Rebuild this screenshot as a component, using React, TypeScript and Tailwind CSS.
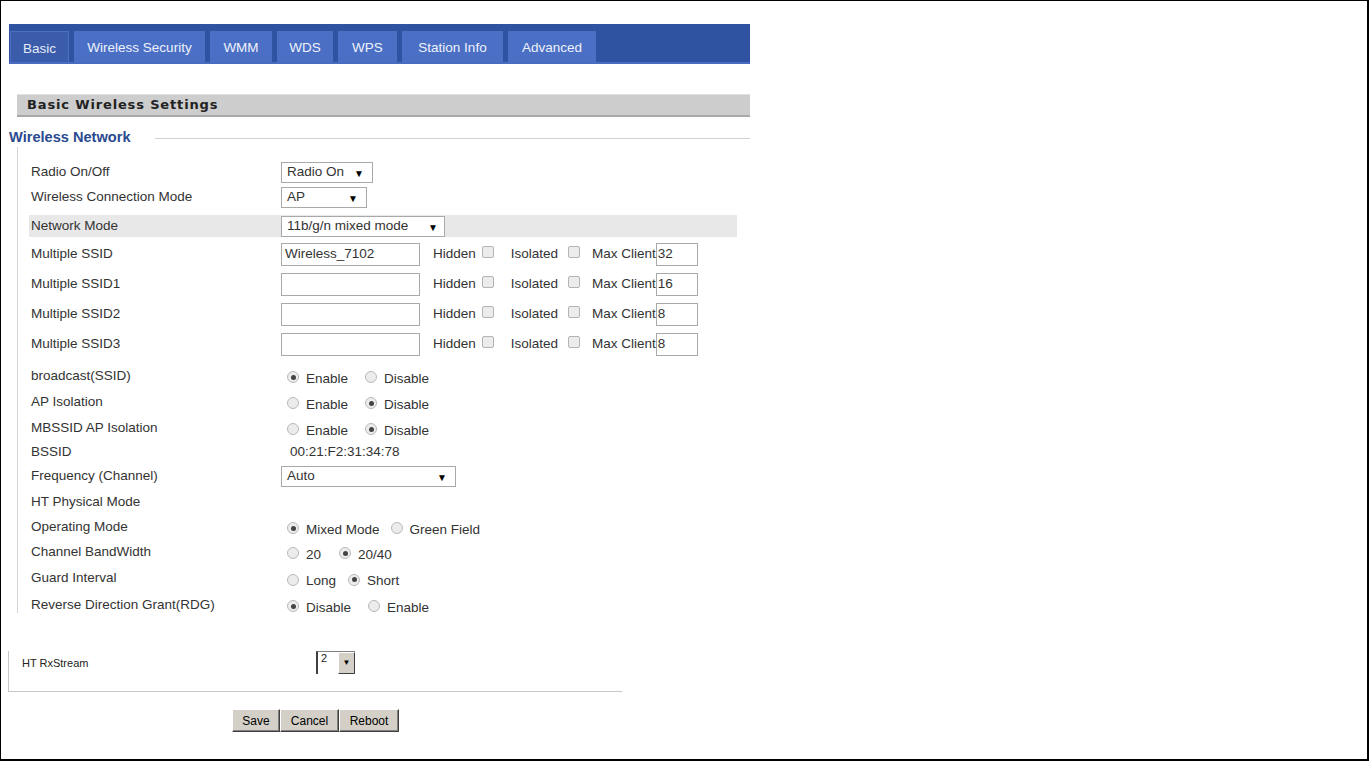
import React from "react";

const font = { fontFamily: '"Liberation Sans", Arial, sans-serif' };

function Sel({ w, text, arrowRight = 8 }: { w: number; text: string; arrowRight?: number }) {
  return (
    <div
      className="relative flex h-[21px] items-center border border-[#a9a9a9] bg-white pl-[5px] text-[13.5px] text-[#333]"
      style={{ width: w }}
    >
      <span>{text}</span>
      <span className="absolute top-[3px] text-[10px] text-black" style={{ right: arrowRight }}>
        ▼
      </span>
    </div>
  );
}

function Check() {
  return <span className="inline-block h-[12px] w-[12px] rounded-[2px] border border-[#b4b4b4] bg-[#ececec]" />;
}

function Radio({ on }: { on: boolean }) {
  return (
    <span className="inline-flex h-[12px] w-[12px] items-center justify-center rounded-full border border-[#b9b9b9] bg-[#ececec]">
      {on && <span className="h-[5px] w-[5px] rounded-full bg-[#444]" />}
    </span>
  );
}

function Radios({ opts }: { opts: [string, boolean, number][] }) {
  return (
    <div className="ml-[6px] mt-[6px] flex items-center">
      {opts.map(([t, on, gap], i) => (
        <span key={i} className="flex items-center" style={{ marginRight: gap }}>
          <span className="mt-[-4px] flex">
            <Radio on={on} />
          </span>
          <span className="ml-[7px]">{t}</span>
        </span>
      ))}
    </div>
  );
}

function Row({
  h,
  mt = 0,
  label,
  children,
  bg = false,
}: {
  h: number;
  mt?: number;
  label: string;
  children?: React.ReactNode;
  bg?: boolean;
}) {
  return (
    <div
      className={`flex w-[708px] items-center pl-[2px] ${bg ? "bg-[#e8e8e8]" : ""}`}
      style={{ height: h, marginTop: mt }}
    >
      <div className="w-[250px] shrink-0">{label}</div>
      <div className="flex items-center">{children}</div>
    </div>
  );
}

function SsidRow({ label, value, max }: { label: string; value: string; max: string }) {
  return (
    <Row h={30} label={label}>
      <div className="flex h-[23px] w-[139px] items-center border border-[#a9a9a9] bg-white pl-[3px]">{value}</div>
      <span className="ml-[13px]">Hidden</span>
      <span className="ml-[6px] mt-[-5px] flex">
        <Check />
      </span>
      <span className="ml-[17px]">Isolated</span>
      <span className="ml-[10px] mt-[-5px] flex">
        <Check />
      </span>
      <span className="ml-[12px]">Max Client</span>
      <div className="flex h-[23px] w-[42px] items-center border border-[#a9a9a9] bg-white pl-[1px]">{max}</div>
    </Row>
  );
}

function Btn({ w, children }: { w: number; children: React.ReactNode }) {
  return (
    <button
      className="flex h-[23px] items-center justify-center border border-t-[#ffffff] border-l-[#ffffff] border-r-[#404040] border-b-[#404040] bg-[#d4d0c8] text-[12px] text-black shadow-[inset_-1px_-1px_0_#808080]"
      style={{ width: w }}
    >
      {children}
    </button>
  );
}

export default function App() {
  const tabs = ["Wireless Security", "WMM", "WDS", "WPS", "Station Info", "Advanced"];
  const tabW = [131, 62, 56, 59, 101, 88];
  return (
    <div className="h-[761px] w-[1369px] overflow-hidden bg-white" style={font}>
      <div className="flex h-[761px] w-[1369px] flex-col border-t border-l border-r-2 border-b-2 border-black">
        {/* Tab bar */}
        <div className="ml-[8px] mt-[23px] flex h-[40px] w-[741px] items-end gap-[5px] border-b-2 border-[#4a6cc0] bg-[#3053a1] pl-[1px]">
          <div className="flex h-[31px] w-[59px] items-center justify-center border border-b-0 border-[#4d6fbf] bg-[#3a5cab] pt-[4px] text-[13.5px] text-[#e4ebf8]">
            Basic
          </div>
          {tabs.map((t, i) => (
            <div
              key={t}
              className="flex h-[31px] items-center justify-center bg-[#4a6fc5] pt-[4px] text-[13.5px] text-[#eef2fb]"
              style={{ width: tabW[i] }}
            >
              {t}
            </div>
          ))}
        </div>

        {/* Section header */}
        <div
          className="ml-[16px] mt-[30px] flex h-[23px] w-[733px] items-center border-t border-t-[#e0e0e0] border-b-2 border-b-[#a8a8a8] bg-[#cdcdcd] pl-[10px] text-[13px] font-bold tracking-[0.85px] text-[#222]"
          style={{ fontFamily: '"DejaVu Sans", Verdana, sans-serif' }}
        >
          Basic Wireless Settings
        </div>

        {/* Fieldset legend */}
        <div className="ml-[8px] mt-[12px] flex h-[18px] w-[741px] items-center">
          <span className="text-[14.6px] font-bold text-[#2b4a8f]">Wireless Network</span>
          <span className="ml-[24px] h-px flex-1 bg-[#d0d0d0]" />
        </div>

        {/* Fieldset body (clipped) */}
        <div className="ml-[16px] h-[466px] overflow-hidden border-l border-[#d6d6d6] pl-[11px] text-[13.5px] text-[#333]">
          <div className="pt-[13px]">
            <Row h={24} label="Radio On/Off">
              <Sel w={92} text="Radio On" arrowRight={8} />
            </Row>
            <Row h={26} label="Wireless Connection Mode">
              <Sel w={86} text="AP" arrowRight={8} />
            </Row>
            <Row h={22} mt={5} label="Network Mode" bg>
              <Sel w={164} text="11b/g/n mixed mode" arrowRight={6} />
            </Row>
            <div className="mt-[2px]">
              <SsidRow label="Multiple SSID" value="Wireless_7102" max="32" />
              <SsidRow label="Multiple SSID1" value="" max="16" />
              <SsidRow label="Multiple SSID2" value="" max="8" />
              <SsidRow label="Multiple SSID3" value="" max="8" />
            </div>
            <Row h={26} mt={4} label="broadcast(SSID)">
              <Radios opts={[["Enable", true, 17], ["Disable", false, 0]]} />
            </Row>
            <Row h={26} label="AP Isolation">
              <Radios opts={[["Enable", false, 17], ["Disable", true, 0]]} />
            </Row>
            <Row h={26} label="MBSSID AP Isolation">
              <Radios opts={[["Enable", false, 17], ["Disable", true, 0]]} />
            </Row>
            <Row h={22} label="BSSID">
              <span className="ml-[9px]">00:21:F2:31:34:78</span>
            </Row>
            <Row h={26} label="Frequency (Channel)">
              <Sel w={175} text="Auto" arrowRight={8} />
            </Row>
            <Row h={26} label="HT Physical Mode" />
            <Row h={24} label="Operating Mode">
              <Radios opts={[["Mixed Mode", true, 11], ["Green Field", false, 0]]} />
            </Row>
            <Row h={26} label="Channel BandWidth">
              <Radios opts={[["20", false, 18], ["20/40", true, 0]]} />
            </Row>
            <Row h={27} label="Guard Interval">
              <Radios opts={[["Long", false, 12], ["Short", true, 0]]} />
            </Row>
            <Row h={26} label="Reverse Direction Grant(RDG)">
              <Radios opts={[["Disable", true, 17], ["Enable", false, 0]]} />
            </Row>
          </div>
        </div>

        {/* Lower section */}
        <div
          className="ml-[7px] mt-[38px] flex h-[41px] w-[614px] border-l border-b border-[#c8c8c8] text-[11px] text-[#222]"
          style={{ fontFamily: '"Liberation Sans", Tahoma, sans-serif' }}
        >
          <div className="flex w-[307px] items-start pl-[13px] pt-[4px]">HT RxStream</div>
          <div className="flex h-[23px] w-[39px] border-l-2 border-t border-l-[#404040] border-t-[#808080] bg-white">
            <div className="flex-1 pl-[3px] pt-[1px] text-[11px] leading-none text-[#222]">2</div>
            <div className="flex w-[17px] items-center justify-center border border-t-white border-l-white border-r-[#404040] border-b-[#404040] bg-[#d4d0c8] text-[8px] text-black">
              ▼
            </div>
          </div>
        </div>

        <div className="ml-[231px] mt-[17px] flex" style={{ fontFamily: '"Liberation Sans", Tahoma, sans-serif' }}>
          <Btn w={48}>Save</Btn>
          <Btn w={59}>Cancel</Btn>
          <Btn w={60}>Reboot</Btn>
        </div>
      </div>
    </div>
  );
}
